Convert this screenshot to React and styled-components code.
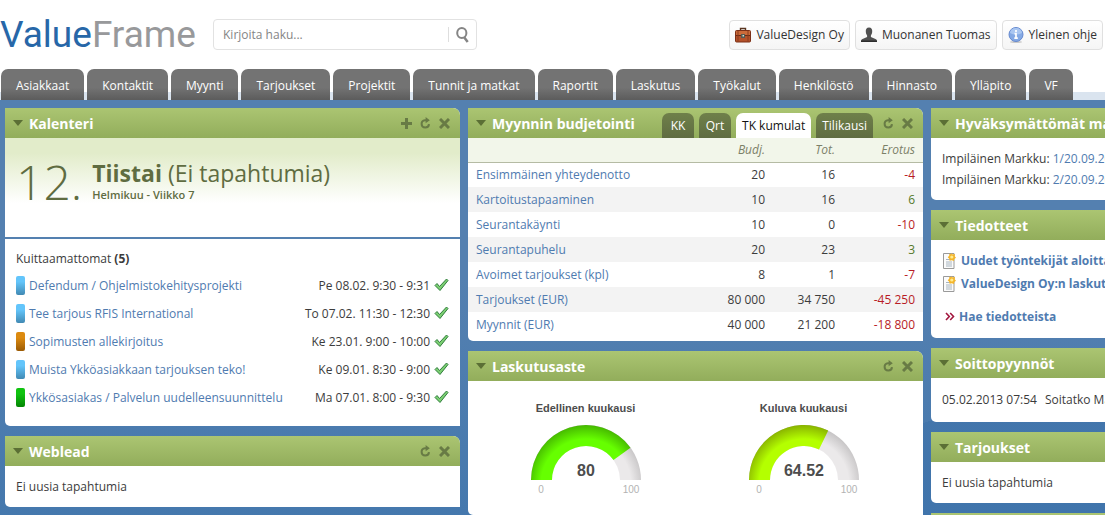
import React from "react";
import styled, { createGlobalStyle } from "styled-components";

const GlobalStyle = createGlobalStyle`
  * { box-sizing: border-box; }
  html { background: #4377ad; }
  body {
    margin: 0;
    overflow-x: hidden;
    font-family: "Open Sans", "Noto Sans", sans-serif;
    font-size: 12px;
    line-height: 21px;
    color: #3c3c3c;
  }
  h1, h2, h3, p, ul { margin: 0; padding: 0; font-weight: inherit; }
  ul { list-style: none; }
  button, input { font: inherit; color: inherit; border: 0; padding: 0; background: none; }
  button { cursor: pointer; }
  svg { display: block; flex: none; }
`;

const Top = styled.header`
  background: #fff;
`;

const TopBar = styled.div`
  display: flex;
  align-items: center;
  height: 69px;
  padding: 0 2px 0 0;
`;

const Logo = styled.a`
  width: 213px;
  flex: none;
  font-family: Roboto, "Open Sans", sans-serif;
  font-size: 37px;
  line-height: 48px;
  color: #98999b;
  text-decoration: none;
`;

const LogoStrong = styled.span`
  color: #2767a8;
`;

const Search = styled.form`
  display: flex;
  align-items: center;
  width: 264px;
  height: 31px;
  border: 1px solid #e2e2e2;
  border-radius: 4px;
`;

const SearchInput = styled.input`
  flex: 1;
  min-width: 0;
  height: 29px;
  padding: 0 9px;
  outline: none;
  &::placeholder { color: #858585; opacity: 1; }
`;

const SearchButton = styled.button`
  display: grid;
  place-items: center;
  width: 28px;
  height: 15px;
  border-left: 1px solid #dedede;
`;

const UserLinks = styled.nav`
  display: flex;
  gap: 5px;
  margin-left: auto;
`;

const UserLink = styled.a`
  display: flex;
  align-items: center;
  gap: 5px;
  height: 30px;
  padding: 0 5px;
  border: 1px solid #e0e0e0;
  border-radius: 4px;
  background: linear-gradient(#fff, #f5f5f5);
  color: #333;
  text-decoration: none;
  white-space: nowrap;
`;

const MainNav = styled.nav`
  display: flex;
  gap: 3px;
  height: 31px;
  padding-left: 1px;
  background: linear-gradient(#fff 23px, #dae4ef 23px);
`;

const NavTab = styled.a`
  height: 31px;
  padding: 0 15px;
  border-radius: 7px 7px 0 0;
  background: linear-gradient(#737373 60%, #5c5c5c);
  color: #fff;
  line-height: 34px;
  text-decoration: none;
  white-space: nowrap;
`;

const Desktop = styled.main`
  display: grid;
  grid-template-columns: repeat(3, minmax(455px, 1fr));
  align-items: start;
  gap: 8px;
  padding: 8px 5px 0;
  min-height: calc(100vh - 100px);
  overflow: hidden;
  background:
    linear-gradient(160deg, transparent 78%, #3b70a980 78%),
    linear-gradient(#5480b0 40%, #4377ad);
`;

const Column = styled.div`
  display: grid;
  gap: 10px;
`;

const PanelBox = styled.section`
  border-radius: 0 7px 0 5px;
  overflow: hidden;
  background: #fff;
`;

const PanelHead = styled.header`
  display: flex;
  align-items: center;
  gap: 6px;
  height: 30px;
  padding: 0 10px 0 8px;
  background: linear-gradient(#abc572, #92ad5b);
`;

const PanelTitle = styled.h2`
  flex: 1;
  color: #fff;
  font-size: 14px;
  font-weight: 700;
  white-space: nowrap;
`;

const PanelTools = styled.div`
  display: flex;
  align-items: center;
  gap: 8px;
`;

const ToolButton = styled.button`
  display: grid;
  place-items: center;
  height: 12px;
`;

const PanelBody = styled.div`
  padding: ${(p) => p.$pad || "10px 11px"};
`;

const PanelTabs = styled.div`
  display: flex;
  align-self: flex-end;
  gap: 5px;
  margin-right: 4px;
`;

const PanelTab = styled.button`
  height: 25px;
  padding: 0 6px;
  min-width: 32px;
  border-radius: 7px 7px 0 0;
  background: ${(p) => (p.$active ? "#fff" : "linear-gradient(#6f804a, #5f6c41)")};
  color: ${(p) => (p.$active ? "#111" : "#fff")};
`;

const Today = styled.div`
  display: flex;
  align-items: flex-start;
  gap: 10px;
  height: 101px;
  padding: 16px 11px 0;
  border-bottom: 2px solid #5480b0;
  background: linear-gradient(#e2ecca 15px, #fff 65px);
  color: #5f6c41;
`;

const DayNumber = styled.strong`
  font-size: 48px;
  font-weight: 300;
  line-height: 56px;
`;

const DayName = styled.h3`
  font-size: 23px;
  line-height: 32px;
  padding-top: 3px;
`;

const DayInfo = styled.p`
  font-size: 11px;
  font-weight: 600;
  line-height: 12px;
`;

const EventList = styled.ul`
  padding-top: 2px;
`;

const EventRow = styled.li`
  display: flex;
  align-items: center;
  height: 28px;
  gap: 4px;
`;

const EventMark = styled.span`
  width: 9px;
  height: 19px;
  border-radius: 2px;
  background: linear-gradient(${(p) => p.$from} 30%, ${(p) => p.$to});
`;

const TextLink = styled.a`
  color: #4f7bb0;
  text-decoration: none;
  font-weight: ${(p) => (p.$bold ? 700 : 400)};
`;

const EventTime = styled.time`
  margin-left: auto;
`;

const Budget = styled.table`
  width: 100%;
  margin-bottom: 4px;
  border-collapse: collapse;
  table-layout: fixed;
  th, td { height: 25px; padding: 0 8px; text-align: right; font-weight: 400; }
  th:first-child { text-align: left; }
  thead tr { background: #f2f6ea; border-bottom: 1px solid #b5bba4; }
  thead th { height: 24px; font-style: italic; color: #7c8068; }
  tbody tr:nth-child(even) { background: #f3f3f3; }
`;

const BudgetCol = styled.col`
  width: ${(p) => p.$width};
`;

const Difference = styled.td`
  color: ${(p) => (p.$negative ? "#b81c25" : "#55792a")};
`;

const Gauges = styled.div`
  display: grid;
  grid-template-columns: repeat(2, 218px);
  justify-content: center;
  height: 134px;
  padding: 17px 2px 0 0;
`;

const GaugeBox = styled.figure`
  margin: 0;
  display: grid;
  justify-items: center;
  align-content: start;
  gap: 5px;
  font-family: "Liberation Sans", Arial, sans-serif;
`;

const GaugeTitle = styled.figcaption`
  font-size: 11px;
  font-weight: 700;
  color: #4d4d4d;
`;

const NewsList = styled.ul`
  padding-bottom: 10px;
`;

const NewsRow = styled.li`
  display: flex;
  align-items: center;
  gap: 4px;
  height: 23px;
`;

const NewsSearch = styled(NewsRow).attrs({ as: "p" })``;

const CallRow = styled.p`
  display: flex;
  gap: 8px;
`;

const PlusIcon = () => (
  <svg width="11" height="11" viewBox="0 0 11 11"><path d="M5.5 0v11M0 5.5h11" stroke="#687b45" strokeWidth="3" /></svg>
);
const RefreshIcon = () => (
  <svg width="11" height="12" viewBox="0 0 11 12">
    <path d="M6.5 3.2H5A3.7 3.7 0 1 0 9 7.2" fill="none" stroke="#687b45" strokeWidth="2" />
    <path d="M5.6 0 9.8 3.2 5.6 6.2Z" fill="#687b45" />
  </svg>
);
const CloseIcon = () => (
  <svg width="11" height="11" viewBox="0 0 11 11"><path d="m1 1 9 9M10 1l-9 9" stroke="#687b45" strokeWidth="3" /></svg>
);
const ArrowIcon = () => (
  <svg width="10" height="6" viewBox="0 0 10 6"><path d="M0 0h10L5 6Z" fill="#5b6f35" /></svg>
);
const CheckIcon = () => (
  <svg width="15" height="14" viewBox="0 0 15 14">
    <path d="M1 7.5 3 5.5 5.5 8.5 12.5 1 14 2.5 6 12.5Z" fill="#7ccf72" stroke="#2f7d3c" strokeLinejoin="round" />
  </svg>
);
const SearchIcon = () => (
  <svg width="13" height="16" viewBox="0 0 13 16" fill="none" stroke="#858585">
    <ellipse cx="5.8" cy="6" rx="4.6" ry="5" strokeWidth="2" />
    <path d="m8.3 10.5 3.4 4.5" strokeWidth="2.5" />
  </svg>
);
const CaseIcon = () => (
  <svg width="16" height="16" viewBox="0 0 16 16">
    <path d="M5.5 3.5v-2h5v2" fill="none" stroke="#5a3520" strokeWidth="1.4" />
    <rect x=".5" y="3.5" width="15" height="11.5" rx="1" fill="#b4512a" stroke="#7c3017" />
    <path d="M1 4h14v4H1z" fill="#cb6b3a" />
    <path d="M1 8.5h14" stroke="#6b2a14" />
    <path d="M3 4v10.5M13 4v10.5" stroke="#8b3c1e" />
    <rect x="6" y="7" width="4" height="4" fill="#565b55" />
    <path d="M7.5 8h1.5v1.5H7.5z" fill="#d9dfcf" />
  </svg>
);
const PersonIcon = () => (
  <svg width="16" height="16" viewBox="0 0 16 16">
    <path d="M8 .5c2.400 0 3.400 1.800 3.200 4.200-.1 1.900-.8 2.700-1.300 3.700v1.600l5.100 2.200c.8.400 1 1.600 1 2.800H0c0-1.200.2-2.400 1-2.800l5.100-2.200V8.400C5.600 7.400 4.900 6.600 4.800 4.700 4.600 2.300 5.600.5 8 .5Z" fill="#505050" />
    <path d="M0 13.500h16V15H0z" fill="#2c2c2c" />
  </svg>
);
const InfoIcon = () => (
  <svg width="16" height="16" viewBox="0 0 16 16">
    <ellipse cx="8" cy="15" rx="6" ry="1" fill="#c9c9c9" />
    <circle cx="8" cy="7.500" r="7" fill="#84a9e4" stroke="#6689cf" />
    <path d="M2 6a6 5 0 0 1 12 0q-6 3-12 0Z" fill="#a9c6f1" />
    <path d="M8 3v2M6.500 6.700H8V11M6.300 11.200h3.500" fill="none" stroke="#fff" strokeWidth="1.700" />
  </svg>
);
const NewsIcon = () => (
  <svg width="15" height="16" viewBox="0 0 15 16">
    <path d="M1.500 .5H12v15H1.500z" fill="#fbfbfb" stroke="#9a9a9a" />
    <path d="M4 6.500h4M4 9h6M4 11h6M4 13h6" stroke="#a8b5c0" />
    <path d="m9.500 0 1.200 1.500 2.300-.4-.3 2.200 1.300 1.500-1.700 1.200-.3 2-2.200-.8-2.200.6-.4-2.100L5.700 4.300l1.500-1.500.1-2 2 .4Z" fill="#f4b52b" />
    <circle cx="9.800" cy="4" r="1.600" fill="#ffec91" />
  </svg>
);
const ChevronsIcon = () => (
  <svg width="13" height="9" viewBox="-3 0 13 9"><path d="m1 1 3.300 3.500L1 8M5.200 1l3.300 3.500L5.200 8" fill="none" stroke="#a3173f" strokeWidth="1.600" /></svg>
);

function Panel({ title, tabs, canAdd, children }) {
  return (
    <PanelBox>
      <PanelHead>
        <ArrowIcon />
        <PanelTitle>{title}</PanelTitle>
        {tabs}
        <PanelTools>
          {canAdd && <ToolButton type="button" aria-label="Lisää"><PlusIcon /></ToolButton>}
          <ToolButton type="button" aria-label="Päivitä"><RefreshIcon /></ToolButton>
          <ToolButton type="button" aria-label="Sulje"><CloseIcon /></ToolButton>
        </PanelTools>
      </PanelHead>
      {children}
    </PanelBox>
  );
}

function Gauge({ id, title, value, color, edge }) {
  const angle = Math.PI * (1 - value / 100);
  const point = (r) => `${60 + r * Math.cos(angle)} ${56 - r * Math.sin(angle)}`;
  return (
    <GaugeBox>
      <GaugeTitle>{title}</GaugeTitle>
      <svg width="120" height="74" viewBox="0 0 120 74" role="img" aria-label={`${title} ${value}`}>
        <defs>
          <radialGradient id={`${id}-fill`} gradientUnits="userSpaceOnUse" cx="60" cy="60" r="60">
            <stop offset="0.75" stopColor={color} />
            <stop offset="1" stopColor={edge} />
          </radialGradient>
          <radialGradient id={`${id}-rest`} gradientUnits="userSpaceOnUse" cx="60" cy="60" r="60">
            <stop offset="0.75" stopColor="#ebe9ea" />
            <stop offset="1" stopColor="#c2c0c1" />
          </radialGradient>
        </defs>
        <path d="M5 56A55 55 0 0 1 115 56H94A34 34 0 0 0 26 56Z" fill={`url(#${id}-rest)`} />
        <path d={`M5 56A55 55 0 0 1 ${point(55)}L${point(34)}A34 34 0 0 0 26 56Z`} fill={`url(#${id}-fill)`} />
        <text x="60" y="52" textAnchor="middle" fontSize="16" fontWeight="700" fill="#4d4d4d">{value}</text>
        <text x="15" y="69" textAnchor="middle" fontSize="10" fill="#b3b3b3">0</text>
        <text x="105" y="69" textAnchor="middle" fontSize="10" fill="#b3b3b3">100</text>
      </svg>
    </GaugeBox>
  );
}

const navItems = ["Asiakkaat", "Kontaktit", "Myynti", "Tarjoukset", "Projektit", "Tunnit ja matkat", "Raportit", "Laskutus", "Työkalut", "Henkilöstö", "Hinnasto", "Ylläpito", "VF"];

const marks = {
  blue: ["#63c5fb", "#4189b3"],
  orange: ["#dc8a10", "#9b5a03"],
  green: ["#10c310", "#048504"],
};

const events = [
  ["blue", "Defendum / Ohjelmistokehitysprojekti", "Pe 08.02. 9:30 - 9:31"],
  ["blue", "Tee tarjous RFIS International", "To 07.02. 11:30 - 12:30"],
  ["orange", "Sopimusten allekirjoitus", "Ke 23.01. 9:00 - 10:00"],
  ["blue", "Muista Ykköasiakkaan tarjouksen teko!", "Ke 09.01. 8:30 - 9:00"],
  ["green", "Ykkösasiakas / Palvelun uudelleensuunnittelu", "Ma 07.01. 8:00 - 9:30"],
];

const budgetRows = [
  ["Ensimmäinen yhteydenotto", "20", "16", "-4"],
  ["Kartoitustapaaminen", "10", "16", "6"],
  ["Seurantakäynti", "10", "0", "-10"],
  ["Seurantapuhelu", "20", "23", "3"],
  ["Avoimet tarjoukset (kpl)", "8", "1", "-7"],
  ["Tarjoukset (EUR)", "80 000", "34 750", "-45 250"],
  ["Myynnit (EUR)", "40 000", "21 200", "-18 800"],
];

const budgetTabs = ["KK", "Qrt", "TK kumulat", "Tilikausi"];

export default function App() {
  return (
    <>
      <GlobalStyle />
      <Top>
        <TopBar>
          <Logo href="#"><LogoStrong>Value</LogoStrong>Frame</Logo>
          <Search role="search">
            <SearchInput type="text" aria-label="Haku" placeholder="Kirjoita haku..." />
            <SearchButton type="button" aria-label="Hae"><SearchIcon /></SearchButton>
          </Search>
          <UserLinks>
            <UserLink href="#"><CaseIcon />ValueDesign Oy</UserLink>
            <UserLink href="#"><PersonIcon />Muonanen Tuomas</UserLink>
            <UserLink href="#"><InfoIcon />Yleinen ohje</UserLink>
          </UserLinks>
        </TopBar>
        <MainNav>
          {navItems.map((item) => <NavTab key={item} href="#">{item}</NavTab>)}
        </MainNav>
      </Top>
      <Desktop>
        <Column>
          <Panel title="Kalenteri" canAdd>
            <Today>
              <DayNumber>12.</DayNumber>
              <div>
                <DayName><b>Tiistai</b> (Ei tapahtumia)</DayName>
                <DayInfo>Helmikuu - Viikko 7</DayInfo>
              </div>
            </Today>
            <PanelBody $pad="9px 11px 15px">
              <p>Kuittaamattomat <b>(5)</b></p>
              <EventList>
                {events.map(([mark, name, time]) => (
                  <EventRow key={name}>
                    <EventMark $from={marks[mark][0]} $to={marks[mark][1]} />
                    <TextLink href="#">{name}</TextLink>
                    <EventTime>{time}</EventTime>
                    <CheckIcon />
                  </EventRow>
                ))}
              </EventList>
            </PanelBody>
          </Panel>
          <Panel title="Weblead">
            <PanelBody><p>Ei uusia tapahtumia</p></PanelBody>
          </Panel>
        </Column>
        <Column>
          <Panel
            title="Myynnin budjetointi"
            tabs={
              <PanelTabs>
                {budgetTabs.map((tab) => (
                  <PanelTab key={tab} type="button" $active={tab === "TK kumulat"}>{tab}</PanelTab>
                ))}
              </PanelTabs>
            }
          >
            <Budget>
              <colgroup>
                <BudgetCol />
                <BudgetCol $width="90px" />
                <BudgetCol $width="70px" />
                <BudgetCol $width="80px" />
              </colgroup>
              <thead>
                <tr><th aria-label="Rivi" /><th>Budj.</th><th>Tot.</th><th>Erotus</th></tr>
              </thead>
              <tbody>
                {budgetRows.map(([name, budget, total, diff]) => (
                  <tr key={name}>
                    <th scope="row"><TextLink href="#">{name}</TextLink></th>
                    <td>{budget}</td>
                    <td>{total}</td>
                    <Difference $negative={diff.startsWith("-")}>{diff}</Difference>
                  </tr>
                ))}
              </tbody>
            </Budget>
          </Panel>
          <Panel title="Laskutusaste">
            <Gauges>
              <Gauge id="previous" title="Edellinen kuukausi" value={80} color="#66ff00" edge="#43b300" />
              <Gauge id="current" title="Kuluva kuukausi" value={64.52} color="#b4ff00" edge="#86ad00" />
            </Gauges>
          </Panel>
        </Column>
        <Column>
          <Panel title="Hyväksymättömät matkalaskut">
            <PanelBody>
              <p>Impiläinen Markku: <TextLink href="#">1/20.09.2012</TextLink></p>
              <p>Impiläinen Markku: <TextLink href="#">2/20.09.2012</TextLink></p>
            </PanelBody>
          </Panel>
          <Panel title="Tiedotteet">
            <PanelBody $pad="9px 11px 10px">
              <NewsList>
                <NewsRow><NewsIcon /><TextLink $bold href="#">Uudet työntekijät aloittavat</TextLink></NewsRow>
                <NewsRow><NewsIcon /><TextLink $bold href="#">ValueDesign Oy:n laskutus</TextLink></NewsRow>
              </NewsList>
              <NewsSearch><ChevronsIcon /><TextLink $bold href="#">Hae tiedotteista</TextLink></NewsSearch>
            </PanelBody>
          </Panel>
          <Panel title="Soittopyynnöt">
            <PanelBody $pad="11px 11px 12px">
              <CallRow><span>05.02.2013 07:54</span><span>Soitatko Matille</span></CallRow>
            </PanelBody>
          </Panel>
          <Panel title="Tarjoukset">
            <PanelBody><p>Ei uusia tapahtumia</p></PanelBody>
          </Panel>
          <Panel title="Projektit" />
        </Column>
      </Desktop>
    </>
  );
}
